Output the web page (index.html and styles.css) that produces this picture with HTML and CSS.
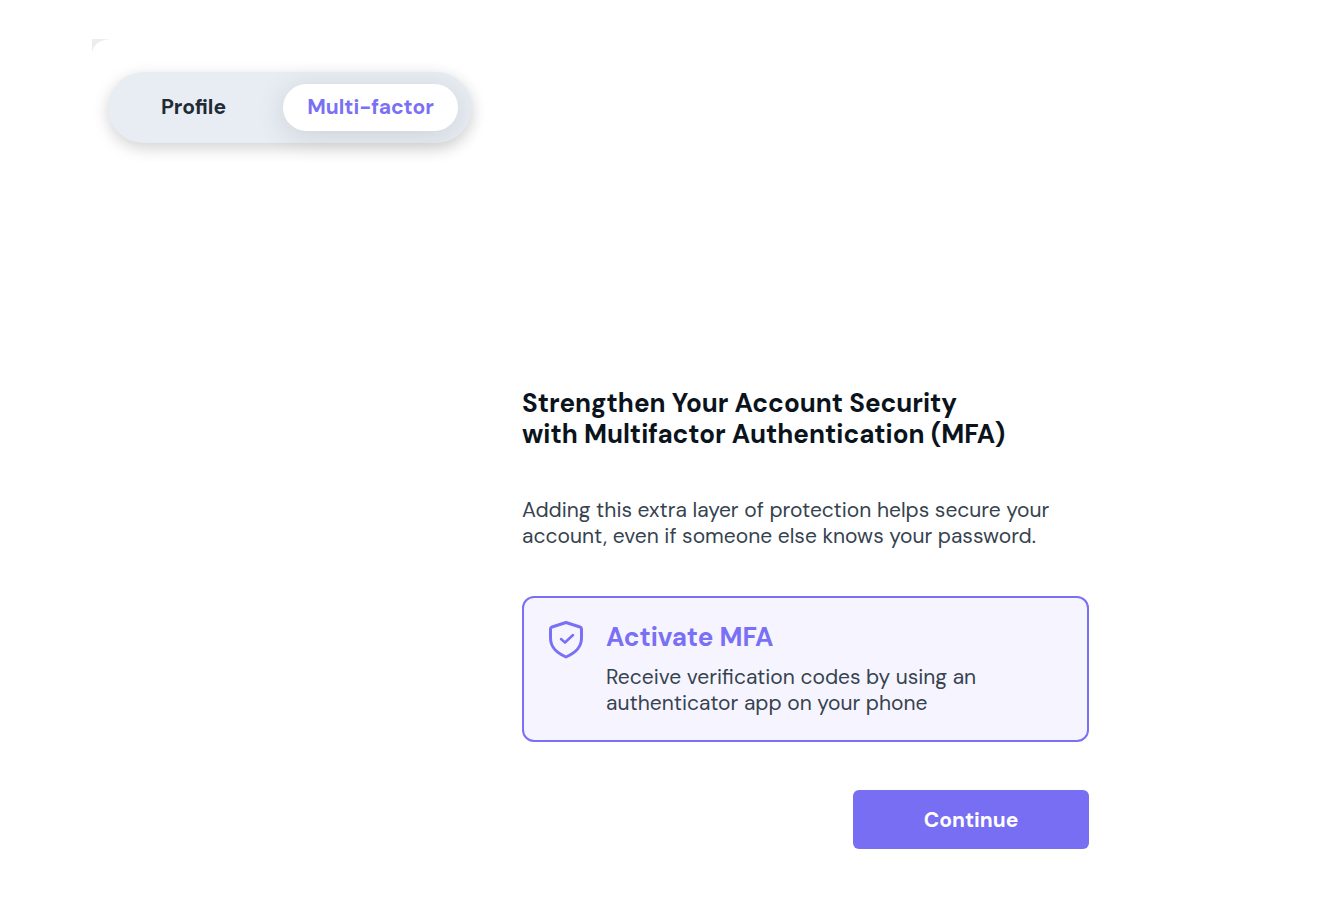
FILE: index.html
```html
<!DOCTYPE html>
<html lang="en">
<head>
<meta charset="utf-8">
<meta name="viewport" content="width=device-width, initial-scale=1">
<title>Multi-factor authentication</title>
<link rel="stylesheet" href="styles.css">
</head>
<body>
<div class="page">
  <main class="panel">
    <nav class="tabs" aria-label="Account settings">
      <button class="tab" type="button">Profile</button>
      <button class="tab tab-active" type="button" aria-current="page">Multi-factor</button>
    </nav>
    <section class="mfa">
      <h1 class="title">Strengthen Your Account Security<br>with Multifactor Authentication (MFA)</h1>
      <p class="text intro">Adding this extra layer of protection helps secure your<br>account, even if someone else knows your password.</p>
      <button class="option" type="button">
        <svg class="option-icon" viewBox="0 0 36 40" fill="none" stroke="currentColor" stroke-linecap="round" stroke-linejoin="round" aria-hidden="true">
          <path stroke-width="3" d="M18 3.500 L32 8 Q33.500 8.500 33.500 10 V19 C33.500 29 27 34 18 38 C9 34 2.500 29 2.500 19 V10 Q2.500 8.500 4 8 Z"/>
          <path stroke-width="2.500" d="M13 20 L17 23.500 L25 16"/>
        </svg>
        <span class="option-body">
          <span class="option-title">Activate MFA</span>
          <span class="text">Receive verification codes by using an<br>authenticator app on your phone</span>
        </span>
      </button>
      <button class="continue" type="button">Continue</button>
    </section>
  </main>
</div>
</body>
</html>
```
FILE: styles.css
```css
* {
  box-sizing: border-box;
}

body {
  margin: 0;
  background: #fff;
  font-family: "DM Sans", Inter, sans-serif;
  color: #0b141d;
}

button {
  font: inherit;
  border: 0;
  cursor: pointer;
}

.page {
  min-height: 100vh;
  padding: 39px 0 0 92px;
  display: flex;
  background: linear-gradient(#ecedef, #ecedef) 92px 39px / 24px 24px no-repeat;
}

.panel {
  flex: 1;
  padding: 33px 16px 48px;
  background: #fff;
  border-top-left-radius: 20px 14px;
}

.tabs {
  display: inline-flex;
  padding: 12px 14px 12px 12px;
  border-radius: 36px;
  background: #e8edf4;
  box-shadow: 0 5px 16px rgba(0, 0, 0, 0.18);
}

.tab {
  height: 47px;
  min-width: 147px;
  padding: 0 0 2px;
  border-radius: 24px;
  background: transparent;
  font-size: 21px;
  font-weight: 700;
  color: #202a35;
}

.tab + .tab {
  margin-left: 16px;
}

.tab-active {
  min-width: 175px;
  background: #fff;
  color: #7a70f5;
  box-shadow: 0 5px 30px rgba(0, 0, 0, 0.12);
}

.mfa {
  display: flex;
  flex-direction: column;
  max-width: 567px;
  margin: 245px 239px 0 auto;
}

.title {
  margin: 0;
  font-size: 26px;
  line-height: 31px;
  font-weight: 700;
  white-space: nowrap;
}

.text {
  font-size: 21px;
  line-height: 26px;
  font-weight: 400;
  color: #36434f;
}

.intro {
  margin: 47px 0 47px;
}

.option {
  display: flex;
  align-items: flex-start;
  gap: 22px;
  padding: 21px 24px 24px;
  border: 2px solid #7a70f5;
  border-radius: 12px;
  background: #f6f5ff;
  color: #7a70f5;
  text-align: left;
}

.option-icon {
  width: 36px;
  height: 40px;
  flex: none;
}

.option-body {
  display: flex;
  flex-direction: column;
  gap: 9px;
}

.option-title {
  font-size: 26px;
  line-height: 36px;
  font-weight: 700;
}

.continue {
  align-self: flex-end;
  width: 236px;
  height: 59px;
  margin-top: 48px;
  border-radius: 6px;
  background: #776ef4;
  color: #fff;
  font-size: 21px;
  font-weight: 700;
}
```
